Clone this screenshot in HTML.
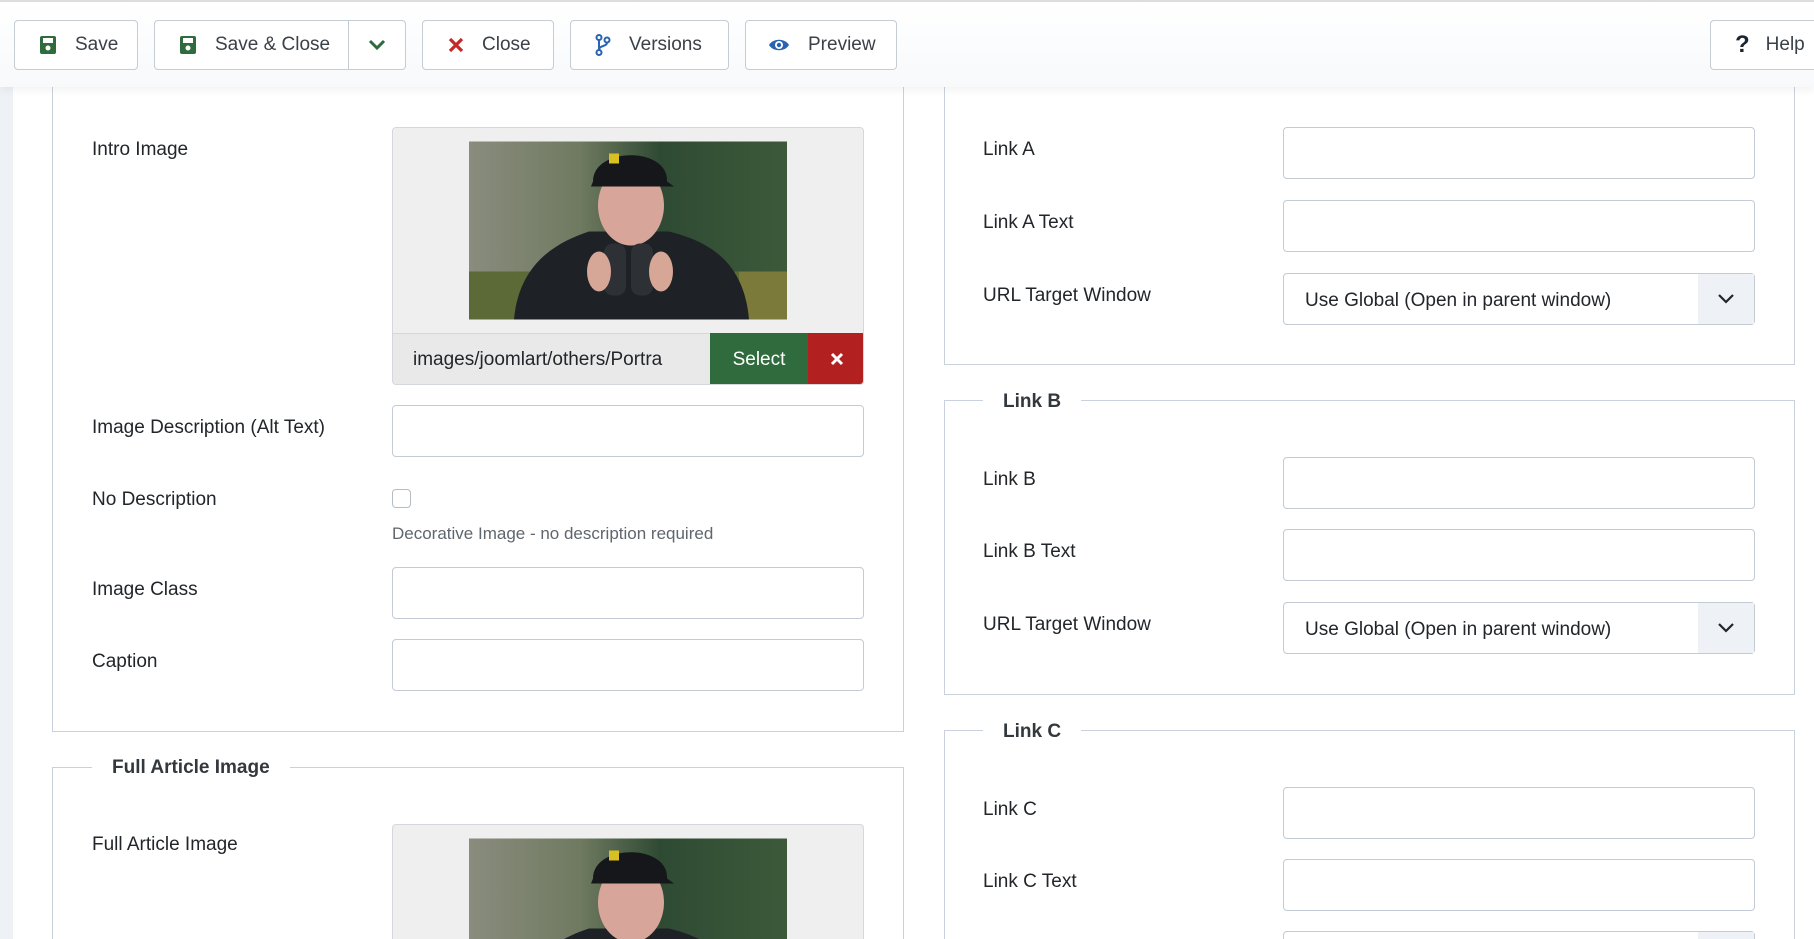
<!DOCTYPE html>
<html style="width:1814px;height:939px;overflow:hidden"><head><meta charset="utf-8"><style>
*{box-sizing:border-box;margin:0;padding:0}
body{width:1814px;height:939px;overflow:hidden;background:#fff;font-family:"Liberation Sans",sans-serif;color:#22262a}
#wrap{position:relative;width:1814px;height:939px;overflow:hidden}
.abs{position:absolute}
.tb{position:absolute;left:0;top:0;width:1814px;height:87px;background:linear-gradient(#fff,#f7f9fb);box-shadow:0 3px 8px rgba(0,0,0,.06);border-top:2px solid #ddd;z-index:5}
.btn{position:absolute;top:18px;height:50px;border:1px solid #c5ccd3;border-radius:4px;background:#fff;font-size:19px;color:#3a4148;display:flex;align-items:center}
.btn svg{margin-right:18px}
.lbl{position:absolute;font-size:19px;color:#22262a}
.inp{position:absolute;height:52px;border:1px solid #c3cbd5;border-radius:4px;background:#fff}
.fs{position:absolute;border:1px solid #c9d2dc}
.leg{position:absolute;background:#fff;font-weight:bold;font-size:19px;padding:0 20px;color:#33383d}
.sel{position:absolute;height:52px;border:1px solid #c3cbd5;border-radius:4px;background:#fff;font-size:19px;color:#22262a;padding:16px 0 0 21px}
.sel .ar{position:absolute;right:0;top:0;width:56px;height:50px;background:#eef2f7;display:flex;align-items:center;justify-content:center}
</style></head><body><div id="wrap">
<div class="abs" style="left:0;top:0;width:13px;height:939px;background:#eef2f7"></div>

<div class="tb">
 <div class="btn" style="left:14px;width:124px;padding-left:24px"><svg width="18" height="20" viewBox="0 0 18 20"><rect x="1" y="1" width="16" height="18" rx="2" fill="#2f6b3c"/><rect x="4" y="3" width="10" height="5" fill="#fff"/><circle cx="9" cy="13" r="2.5" fill="#fff"/></svg>Save</div>
 <div class="btn" style="left:154px;width:252px;padding-left:24px"><svg width="18" height="20" viewBox="0 0 18 20"><rect x="1" y="1" width="16" height="18" rx="2" fill="#2f6b3c"/><rect x="4" y="3" width="10" height="5" fill="#fff"/><circle cx="9" cy="13" r="2.5" fill="#fff"/></svg>Save &amp; Close
  <div class="abs" style="left:193px;top:0;width:1px;height:48px;background:#c5ccd3"></div>
  <svg class="abs" style="left:213px;top:17px" width="18" height="14" viewBox="0 0 18 14"><path d="M2 3 L9 10 L16 3" stroke="#2f6b3c" stroke-width="3" fill="none"/></svg></div>
 <div class="btn" style="left:422px;width:132px;padding-left:25px"><svg width="16" height="16" viewBox="0 0 16 16"><path d="M2 2L14 14M14 2L2 14" stroke="#c52827" stroke-width="3.2"/></svg>Close</div>
 <div class="btn" style="left:570px;width:159px;padding-left:24px"><svg width="16" height="22" viewBox="0 0 16 22"><circle cx="4" cy="3.5" r="2.5" fill="none" stroke="#2a63b0" stroke-width="2"/><circle cx="4" cy="18.5" r="2.5" fill="none" stroke="#2a63b0" stroke-width="2"/><circle cx="12" cy="6" r="2.5" fill="none" stroke="#2a63b0" stroke-width="2"/><path d="M4 6V16M12 8.5C12 13 4 11 4 16" stroke="#2a63b0" stroke-width="2" fill="none"/></svg>Versions</div>
 <div class="btn" style="left:745px;width:152px;padding-left:22px"><svg width="22" height="16" viewBox="0 0 22 16"><path d="M1 8C5 1 17 1 21 8C17 15 5 15 1 8Z" fill="#2a63b0"/><circle cx="11" cy="8" r="4" fill="#fff"/><circle cx="11" cy="8" r="2.2" fill="#2a63b0"/></svg>Preview</div>
 <div class="btn" style="left:1710px;width:104px;padding-left:24px;border-right:none;border-radius:4px 0 0 4px"><span style="font-weight:bold;font-size:24px;color:#1d2530;margin-right:16px">?</span>Help</div>
</div>

<div class="fs" style="left:52px;top:60px;width:852px;height:672px"></div>
<div class="lbl" style="left:92px;top:139px">Intro Image</div>
<div class="abs" style="left:392px;top:127px;width:472px;height:258px;background:#efefef;border:1px solid #d4d8dc;border-radius:4px;overflow:hidden">
 <svg class="abs" style="left:76px;top:13px" width="318" height="179" viewBox="0 0 318 178">
  <defs><linearGradient id="g" x1="0" x2="1"><stop offset="0" stop-color="#8a8c7e"/><stop offset=".35" stop-color="#6f7a60"/><stop offset=".6" stop-color="#2f4a33"/><stop offset="1" stop-color="#3c5a3a"/></linearGradient></defs>
  <rect width="318" height="178" fill="url(#g)"/>
  <rect y="130" width="318" height="48" fill="#5b6a36"/>
  <rect x="270" y="130" width="48" height="48" fill="#7b7a3a"/>
  <path d="M45 178C50 120 90 100 120 90L200 90C240 100 275 120 280 178Z" fill="#1e2226"/>
  <ellipse cx="162" cy="64" rx="33" ry="40" fill="#d8a59a"/>
  <path d="M124 40C124 5 200 5 198 40L205 45L122 45Z" fill="#15171a"/>
  <rect x="140" y="12" width="10" height="10" fill="#d9c022"/>
  <rect x="135" y="102" width="22" height="52" rx="9" fill="#2d3034"/><rect x="162" y="102" width="22" height="52" rx="9" fill="#2d3034"/>
  <ellipse cx="130" cy="130" rx="12" ry="20" fill="#d6a696"/><ellipse cx="192" cy="130" rx="12" ry="20" fill="#d6a696"/>
 </svg>
 <div class="abs" style="left:0;top:205px;width:472px;height:52px;background:#e9e9e9;border-top:1px solid #d4d8dc"></div>
 <div class="abs" style="left:20px;top:221px;font-size:19px;color:#22262a">images/joomlart/others/Portra</div>
 <div class="abs" style="left:317px;top:205px;width:98px;height:52px;background:#2f6b3c;color:#fff;font-size:19px;text-align:center;line-height:54px">Select</div>
 <div class="abs" style="left:415px;top:205px;width:57px;height:52px;background:#b2201f;display:flex;align-items:center;justify-content:center"><svg width="14" height="14" viewBox="0 0 14 14"><path d="M2 2L12 12M12 2L2 12" stroke="#fff" stroke-width="3"/></svg></div>
</div>
<div class="lbl" style="left:92px;top:417px">Image Description (Alt Text)</div>
<div class="inp" style="left:392px;top:405px;width:472px"></div>
<div class="lbl" style="left:92px;top:489px">No Description</div>
<div class="abs" style="left:392px;top:489px;width:19px;height:19px;border:1px solid #b5bcc4;border-radius:4px"></div>
<div class="abs" style="left:392px;top:524px;font-size:17px;color:#5f666d">Decorative Image - no description required</div>
<div class="lbl" style="left:92px;top:579px">Image Class</div>
<div class="inp" style="left:392px;top:567px;width:472px"></div>
<div class="lbl" style="left:92px;top:651px">Caption</div>
<div class="inp" style="left:392px;top:639px;width:472px"></div>

<div class="fs" style="left:52px;top:767px;width:852px;height:172px;border-bottom:none"></div>
<div class="leg" style="left:92px;top:757px">Full Article Image</div>
<div class="lbl" style="left:92px;top:834px">Full Article Image</div>
<div class="abs" style="left:392px;top:824px;width:472px;height:115px;background:#efefef;border:1px solid #d4d8dc;border-bottom:none;border-radius:4px 4px 0 0;overflow:hidden">
 <svg class="abs" style="left:76px;top:13px" width="318" height="179" viewBox="0 0 318 178">
  <rect width="318" height="178" fill="url(#g)"/>
  <rect y="130" width="318" height="48" fill="#5b6a36"/>
  <path d="M45 178C50 120 90 100 120 90L200 90C240 100 275 120 280 178Z" fill="#1e2226"/>
  <ellipse cx="162" cy="64" rx="33" ry="40" fill="#d8a59a"/>
  <path d="M124 40C124 5 200 5 198 40L205 45L122 45Z" fill="#15171a"/>
  <rect x="140" y="12" width="10" height="10" fill="#d9c022"/>
 </svg>
</div>

<div class="fs" style="left:944px;top:60px;width:851px;height:305px"></div>
<div class="lbl" style="left:983px;top:139px">Link A</div>
<div class="inp" style="left:1283px;top:127px;width:472px"></div>
<div class="lbl" style="left:983px;top:212px">Link A Text</div>
<div class="inp" style="left:1283px;top:200px;width:472px"></div>
<div class="lbl" style="left:983px;top:285px">URL Target Window</div>
<div class="sel" style="left:1283px;top:273px;width:472px">Use Global (Open in parent window)<div class="ar"><svg width="18" height="12" viewBox="0 0 18 12"><path d="M2 2L9 9L16 2" stroke="#22262a" stroke-width="2.2" fill="none"/></svg></div></div>

<div class="fs" style="left:944px;top:400px;width:851px;height:295px"></div>
<div class="leg" style="left:983px;top:391px">Link B</div>
<div class="lbl" style="left:983px;top:469px">Link B</div>
<div class="inp" style="left:1283px;top:457px;width:472px"></div>
<div class="lbl" style="left:983px;top:541px">Link B Text</div>
<div class="inp" style="left:1283px;top:529px;width:472px"></div>
<div class="lbl" style="left:983px;top:614px">URL Target Window</div>
<div class="sel" style="left:1283px;top:602px;width:472px">Use Global (Open in parent window)<div class="ar"><svg width="18" height="12" viewBox="0 0 18 12"><path d="M2 2L9 9L16 2" stroke="#22262a" stroke-width="2.2" fill="none"/></svg></div></div>

<div class="fs" style="left:944px;top:730px;width:851px;height:209px;border-bottom:none"></div>
<div class="leg" style="left:983px;top:721px">Link C</div>
<div class="lbl" style="left:983px;top:799px">Link C</div>
<div class="inp" style="left:1283px;top:787px;width:472px"></div>
<div class="lbl" style="left:983px;top:871px">Link C Text</div>
<div class="inp" style="left:1283px;top:859px;width:472px"></div>
<div class="abs" style="left:1283px;top:931px;width:472px;height:8px;border:1px solid #c3cbd5;border-bottom:none;border-radius:4px 4px 0 0;background:#fff"><div class="abs" style="right:0;top:0;width:56px;height:7px;background:#eef2f7"></div></div>
</div></body></html>
